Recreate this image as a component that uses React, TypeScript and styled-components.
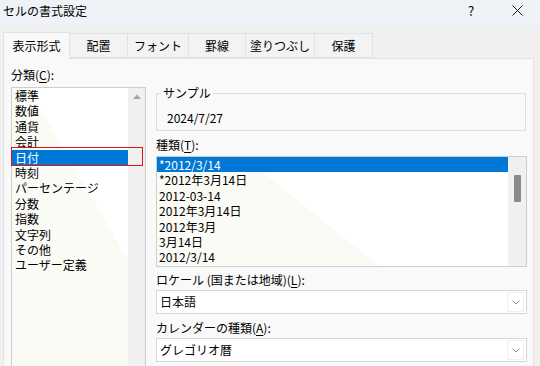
import React from 'react';
import styled, { createGlobalStyle } from 'styled-components';

const Global = createGlobalStyle`
  html, body { margin: 0; padding: 0; }
  body {
    font-family: "Noto Sans CJK JP", "Noto Sans", sans-serif;
    font-size: 12px;
    color: #000;
  }
  #root { width: 540px; height: 366px; overflow: hidden; }
`;

const Window = styled.div`
  width: 540px;
  height: 366px;
  background: #f0f0f0;
  display: flex;
  flex-direction: column;
  overflow: hidden;
`;

const TitleBar = styled.div`
  height: 25px;
  flex: none;
  display: flex;
  align-items: flex-start;
  background: #eff3f8;
`;

const Title = styled.div`
  flex: 1;
  padding: 3px 0 0 3px;
  line-height: 16px;
  font-size: 12px;
`;

const CaptionButton = styled.div`
  width: 46px;
  height: 25px;
  display: flex;
  align-items: center;
  justify-content: center;
  padding-bottom: 5px;
  box-sizing: border-box;
  font-size: 13px;
`;

const TabStrip = styled.div`
  flex: none;
  height: 26px;
  margin-top: 7px;
  padding-left: 3px;
  display: flex;
  align-items: flex-end;
  position: relative;
  z-index: 1;
`;

const Tab = styled.div<{ $active?: boolean; $w: number }>`
  width: ${(p) => p.$w}px;
  height: ${(p) => (p.$active ? 27 : 25)}px;
  margin-bottom: ${(p) => (p.$active ? -1 : 0)}px;
  box-sizing: border-box;
  display: flex;
  align-items: center;
  justify-content: center;
  padding-bottom: ${(p) => (p.$active ? 2 : 1)}px;
  background: ${(p) => (p.$active ? '#f9f9f9' : '#f3f3f3')};
  border: 1px solid #e2e2e2;
  border-bottom: ${(p) => (p.$active ? 'none' : '1px solid #e2e2e2')};
  margin-right: -1px;
  font-size: 12px;
`;

const Panel = styled.div`
  flex: 1;
  min-height: 0;
  margin: 0 6px 0 3px;
  background: #f9f9f9;
  border: 1px solid #e2e2e2;
  border-bottom: none;
  padding: 8px 6px 0 7px;
  display: flex;
  gap: 10px;
`;

const LeftColumn = styled.div`
  width: 135px;
  flex: none;
  display: flex;
  flex-direction: column;
  margin-bottom: -10px;
`;

const RightColumn = styled.div`
  width: 371px;
  flex: none;
  display: flex;
  flex-direction: column;
`;

const FieldLabel = styled.div<{ $mt?: number; $mb?: number }>`
  line-height: 16px;
  height: 16px;
  margin-top: ${(p) => p.$mt ?? 0}px;
  margin-bottom: ${(p) => p.$mb ?? 0}px;
  white-space: nowrap;
  u { text-underline-offset: 2px; }
`;

const ListBox = styled.div<{ $bg: string; $h?: number }>`
  border: 1px solid #cdcdcd;
  display: flex;
  background: ${(p) => p.$bg};
  ${(p) => (p.$h ? `height: ${p.$h}px; flex: none;` : 'flex: 1;')}
  box-sizing: border-box;
  position: relative;
`;

const Items = styled.div`
  flex: 1;
  min-width: 0;
  display: flex;
  flex-direction: column;
`;

const Row = styled.div<{ $selected?: boolean; $pad: number; $focus?: boolean }>`
  height: 15.4px;
  line-height: 15.4px;
  flex: none;
  padding-left: ${(p) => p.$pad}px;
  white-space: nowrap;
  position: relative;
  background: ${(p) => (p.$selected ? '#0078d7' : 'transparent')};
  color: ${(p) => (p.$selected ? '#fff' : '#000')};
  ${(p) =>
    p.$focus
      ? `&::after {
    content: '';
    position: absolute;
    left: -1px;
    right: -15px;
    top: -3px;
    bottom: -1px;
    border: 1px solid #e0120f;
    z-index: 5;
  }`
      : ''}
`;

const ScrollTrack = styled.div<{ $w: number }>`
  width: ${(p) => p.$w}px;
  flex: none;
  background: #f0f0f0;
  display: flex;
  flex-direction: column;
  align-items: center;
`;

const ArrowUp = styled.svg`
  margin-top: 6px;
`;

const Thumb = styled.div`
  width: 7px;
  height: 27px;
  margin-top: 18px;
  margin-left: 1px;
  background: #8a8a8a;
  border-radius: 1px;
`;

const GroupBox = styled.fieldset`
  margin: 18px 1px 0 0;
  padding: 9px 8px 4px 4px;
  border: 1px solid #dedede;
  min-width: 0;
`;

const Legend = styled.legend`
  padding: 0 2px;
  line-height: 16px;
  font-size: 12px;
`;

const SampleValue = styled.div`
  line-height: 16px;
  padding-left: 6px;
`;

const Combo = styled.div`
  height: 24px;
  box-sizing: border-box;
  border: 1px solid #d7d7d7;
  background: #fff;
  display: flex;
  align-items: center;
  padding: 0 2px 0 3px;
  flex: none;
`;

const ComboText = styled.div`
  flex: 1;
  line-height: 16px;
`;

const DropButton = styled.div`
  width: 17px;
  height: 20px;
  box-sizing: border-box;
  border: 1px solid #efefef;
  border-radius: 2px;
  display: flex;
  align-items: center;
  justify-content: center;
`;

const tabs: [string, number][] = [
  ['表示形式', 67],
  ['配置', 59],
  ['フォント', 62],
  ['罫線', 58],
  ['塗りつぶし', 70],
  ['保護', 59],
];

const categories = [
  '標準',
  '数値',
  '通貨',
  '会計',
  '日付',
  '時刻',
  'パーセンテージ',
  '分数',
  '指数',
  '文字列',
  'その他',
  'ユーザー定義',
];

const types = [
  '*2012/3/14',
  '*2012年3月14日',
  '2012-03-14',
  '2012年3月14日',
  '2012年3月',
  '3月14日',
  '2012/3/14',
];

const Chevron = () => (
  <svg width="8" height="5" viewBox="0 0 8 5">
    <path d="M0.5 0.5 L4 4 L7.5 0.5" fill="none" stroke="#8c8c8c" strokeWidth="1" />
  </svg>
);

const CloseIcon = () => (
  <svg width="11" height="11" viewBox="0 0 11 11">
    <path d="M0.5 0.5 L10.5 10.5 M10.5 0.5 L0.5 10.5" stroke="#1a1a1a" strokeWidth="1" />
  </svg>
);

export default function App() {
  return (
    <>
      <Global />
      <Window>
        <TitleBar>
          <Title>セルの書式設定</Title>
          <CaptionButton>?</CaptionButton>
          <CaptionButton>
            <CloseIcon />
          </CaptionButton>
        </TitleBar>
        <TabStrip>
          {tabs.map(([t, w], i) => (
            <Tab key={t} $w={w} $active={i === 0}>
              {t}
            </Tab>
          ))}
        </TabStrip>
        <Panel>
          <LeftColumn>
            <FieldLabel $mb={4}>
              分類(<u>C</u>):
            </FieldLabel>
            <ListBox $bg="linear-gradient(240deg, #ffffff 39%, #fbfbf6 39%)">
              <Items>
                {categories.map((c) => (
                  <Row key={c} $pad={3} $selected={c === '日付'} $focus={c === '日付'}>
                    {c}
                  </Row>
                ))}
              </Items>
              <ScrollTrack $w={17}>
                <ArrowUp width="8" height="5" viewBox="0 0 8 5">
                  <polygon points="0,5 4,0.5 8,5" fill="#a6a6a6" />
                </ArrowUp>
              </ScrollTrack>
            </ListBox>
          </LeftColumn>
          <RightColumn>
            <GroupBox>
              <Legend>サンプル</Legend>
              <SampleValue>2024/7/27</SampleValue>
            </GroupBox>
            <FieldLabel $mt={6} $mb={3}>
              種類(<u>T</u>):
            </FieldLabel>
            <ListBox $h={111} $bg="linear-gradient(219deg, #ffffff 56%, #fbfbf6 56%)">
              <Items>
                {types.map((t, i) => (
                  <Row key={t + i} $pad={2} $selected={i === 0}>
                    {t}
                  </Row>
                ))}
              </Items>
              <ScrollTrack $w={18}>
                <Thumb />
              </ScrollTrack>
            </ListBox>
            <FieldLabel $mt={5} $mb={2}>
              ロケール (国または地域)(<u>L</u>):
            </FieldLabel>
            <Combo>
              <ComboText>日本語</ComboText>
              <DropButton>
                <Chevron />
              </DropButton>
            </Combo>
            <FieldLabel $mt={6} $mb={2}>
              カレンダーの種類(<u>A</u>):
            </FieldLabel>
            <Combo>
              <ComboText>グレゴリオ暦</ComboText>
              <DropButton>
                <Chevron />
              </DropButton>
            </Combo>
          </RightColumn>
        </Panel>
      </Window>
    </>
  );
}
